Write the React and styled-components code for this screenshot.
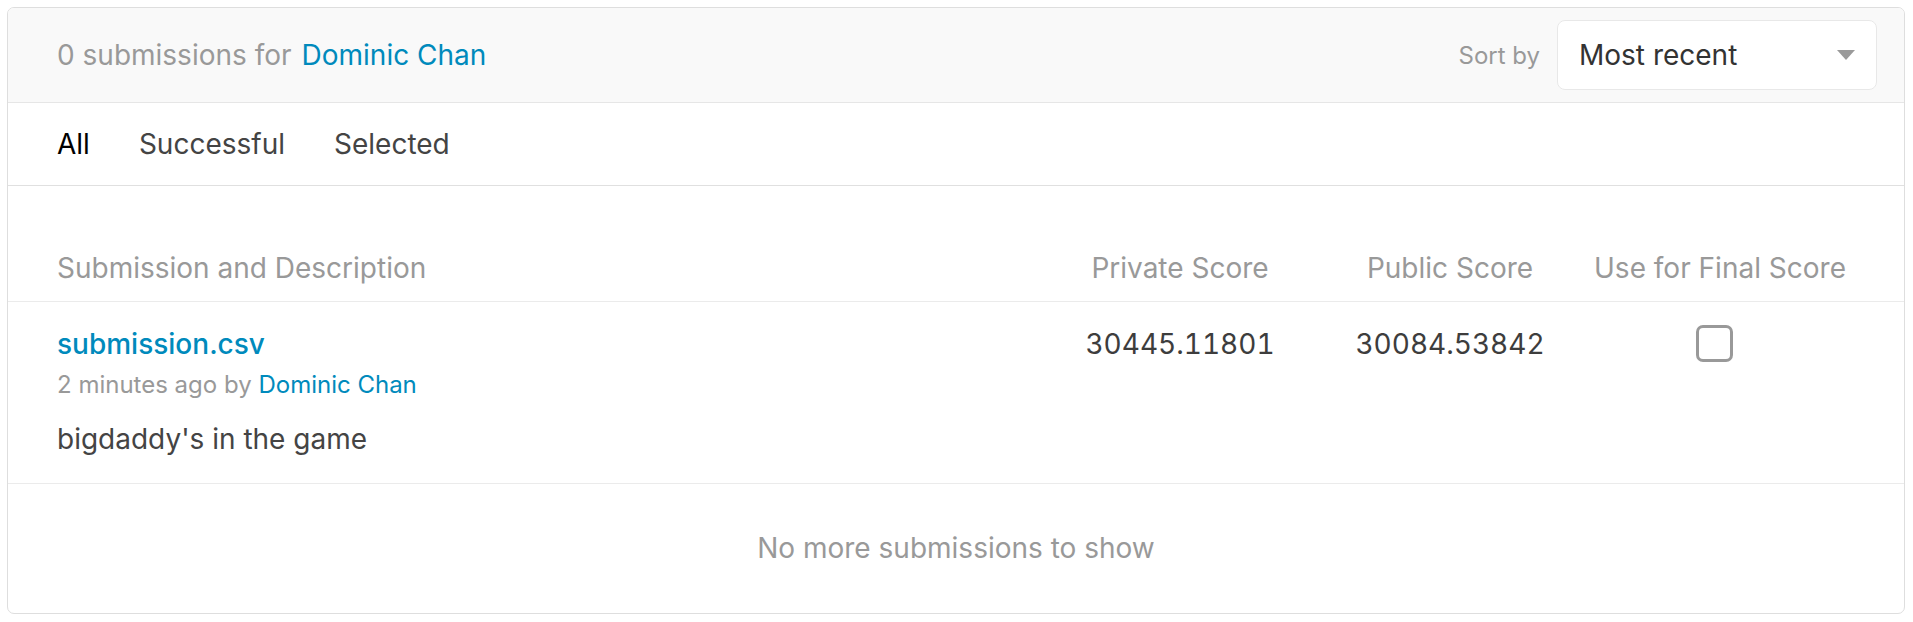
import React, { useState } from 'react';
import styled, { createGlobalStyle } from 'styled-components';

const GlobalStyle = createGlobalStyle`
  html, body {
    margin: 0;
    padding: 0;
    background: #ffffff;
    font-family: Inter, "Noto Sans", "Liberation Sans", sans-serif;
  }
`;

const Page = styled.div`
  padding: 7px 8px 8px 7px;
`;

const Card = styled.section`
  border: 1.5px solid #dedede;
  border-radius: 7px;
  overflow: hidden;
  height: 607px;
  box-sizing: border-box;
  display: flex;
  flex-direction: column;
`;

const Header = styled.header`
  height: 94px;
  flex-shrink: 0;
  display: flex;
  align-items: center;
  justify-content: space-between;
  padding: 0 27px 0 49px;
  background: #f9f9f9;
  border-bottom: 1.5px solid #e6e6e6;
`;

const Count = styled.div`
  font-size: 28px;
  color: #999;
`;

const Link = styled.a`
  color: #008abc;
  text-decoration: none;
  margin-left: ${p => (p.$gap ? '10px' : '0')};
`;

const Sort = styled.div`
  display: flex;
  align-items: center;
  gap: 17px;
`;

const SortLabel = styled.span`
  font-size: 24px;
  color: #999;
`;

const Select = styled.div`
  width: 320px;
  height: 70px;
  box-sizing: border-box;
  display: flex;
  align-items: center;
  justify-content: space-between;
  padding: 0 21px 0 21px;
  background: #fff;
  border: 1.5px solid #e8e8e8;
  border-radius: 8px;
  font-size: 28px;
  color: #333;
`;

const Caret = styled.span`
  width: 0;
  height: 0;
  border-left: 9px solid transparent;
  border-right: 9px solid transparent;
  border-top: 10px solid #9a9a9a;
`;

const Tabs = styled.nav`
  height: 82px;
  flex-shrink: 0;
  display: flex;
  align-items: center;
  gap: 49px;
  padding: 0 49px;
  border-bottom: 1.5px solid #e0e0e0;
`;

const Tab = styled.span`
  font-size: 28px;
  color: ${p => (p.$active ? '#000' : '#444')};
  cursor: pointer;
`;

const Table = styled.div`
  padding-top: 50px;
  display: flex;
  flex-direction: column;
`;

const Row = styled.div`
  display: grid;
  grid-template-columns: 1fr 270px 270px 270px;
  padding: 0 49px;
  border-bottom: 1.5px solid #ebebeb;
`;

const HeadRow = styled(Row)`
  height: 65px;
  align-items: center;
`;

const HeadCell = styled.div`
  font-size: 28px;
  color: #999;
  text-align: ${p => (p.$center ? 'center' : 'left')};
  padding-bottom: 2px;
`;

const BodyRow = styled(Row)`
  padding-top: 24px;
  padding-bottom: 27px;
`;

const Info = styled.div`
  display: flex;
  flex-direction: column;
`;

const FileName = styled.a`
  font-size: 28px;
  font-weight: 500;
  color: #008abc;
  text-decoration: none;
  line-height: 36px;
`;

const Meta = styled.div`
  margin-top: 8px;
  font-size: 24px;
  color: #999;
  line-height: 30px;
`;

const Description = styled.div`
  margin-top: 22px;
  font-size: 28px;
  color: #444;
  line-height: 34px;
`;

const Score = styled.div`
  text-align: center;
  font-size: 28px;
  font-variant-numeric: tabular-nums;
  color: #3d3d3d;
  line-height: 36px;
`;

const CheckCell = styled.div`
  display: flex;
  justify-content: center;
`;

const Checkbox = styled.button`
  width: 37px;
  height: 37px;
  box-sizing: border-box;
  padding: 0;
  margin: -1px 0 0 -12px;
  border: 3px solid #999;
  border-radius: 7px;
  background: ${p => (p.$checked ? '#008abc' : '#fff')};
  cursor: pointer;
`;

const Footer = styled.div`
  flex: 1;
  display: flex;
  align-items: center;
  justify-content: center;
  font-size: 28px;
  color: #999;
  padding-bottom: 2px;
`;

export default function App() {
  const [selected, setSelected] = useState(false);

  return (
    <>
      <GlobalStyle />
      <Page>
        <Card>
          <Header>
            <Count>
              0 submissions for<Link $gap href="#">Dominic Chan</Link>
            </Count>
            <Sort>
              <SortLabel>Sort by</SortLabel>
              <Select>
                Most recent
                <Caret />
              </Select>
            </Sort>
          </Header>

          <Tabs>
            <Tab $active>All</Tab>
            <Tab>Successful</Tab>
            <Tab>Selected</Tab>
          </Tabs>

          <Table>
            <HeadRow>
              <HeadCell>Submission and Description</HeadCell>
              <HeadCell $center>Private Score</HeadCell>
              <HeadCell $center>Public Score</HeadCell>
              <HeadCell $center>Use for Final Score</HeadCell>
            </HeadRow>
            <BodyRow>
              <Info>
                <FileName href="#">submission.csv</FileName>
                <Meta>
                  2 minutes ago by <Link href="#">Dominic Chan</Link>
                </Meta>
                <Description>bigdaddy's in the game</Description>
              </Info>
              <Score>30445.11801</Score>
              <Score>30084.53842</Score>
              <CheckCell>
                <Checkbox $checked={selected} onClick={() => setSelected(!selected)} />
              </CheckCell>
            </BodyRow>
          </Table>

          <Footer>No more submissions to show</Footer>
        </Card>
      </Page>
    </>
  );
}
